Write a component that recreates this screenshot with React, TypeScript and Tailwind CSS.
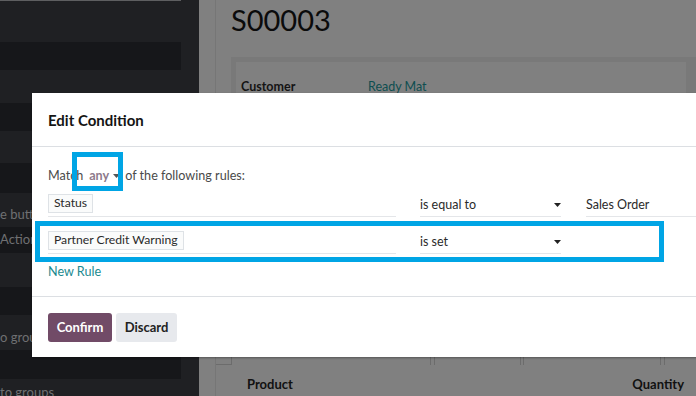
import React from "react";

const font = { fontFamily: 'Lato, "Noto Sans", sans-serif' };

function Caret({ className = "" }: { className?: string }) {
  return (
    <svg width="7" height="4" viewBox="0 0 7 4" className={className}>
      <path d="M0 0 L7 0 L3.5 4 Z" fill="currentColor" />
    </svg>
  );
}

function Band({ h, children }: { h: string; children?: React.ReactNode }) {
  return (
    <div className={`${h} w-[181px] bg-[#16171a] flex items-center overflow-hidden`}>{children}</div>
  );
}

export default function App() {
  return (
    <div
      className="relative w-[696px] h-[396px] overflow-hidden flex bg-[#808080] text-[13px]"
      style={font}
    >
      {/* Sidebar */}
      <div className="w-[199px] shrink-0 bg-[#1f2023] flex flex-col text-[#6f7072] text-[13px]">
        <div className="h-px w-[181px] bg-[#5e5f61]" />
        <div className="h-[41px]" />
        <Band h="h-[28px]" />
        <div className="h-[33px]" />
        <Band h="h-[28px]" />
        <div className="h-[32px]" />
        <Band h="h-[30px]" />
        <div className="h-[34px] flex items-end pb-[3px]">
          <span className="whitespace-nowrap">e butto</span>
        </div>
        <Band h="h-[26px]">
          <span className="whitespace-nowrap">Action</span>
        </Band>
        <div className="h-[34px]" />
        <Band h="h-[28px]" />
        <div className="h-[35px] flex items-end pb-[3px]">
          <span className="whitespace-nowrap">o grou</span>
        </div>
        <Band h="h-[29px]" />
        <div className="h-[17px] flex items-end">
          <span className="whitespace-nowrap leading-[14px] translate-y-[3px]">to groups</span>
        </div>
      </div>

      {/* Main (dimmed) */}
      <div className="flex-1 flex min-w-0">
        <div className="w-[17px] shrink-0 border-r border-[#767676]" />
        <div className="flex-1 flex flex-col pl-[15px] min-w-0">
          <div className="h-[57px] flex items-start pt-[2px]">
            <span className="text-[29px] leading-[36px] text-[#0b0b0b]">S00003</span>
          </div>
          <div className="h-[300px] bg-[#797979] pl-[5px] pt-[5px] pr-[10px]">
            <div className="h-full bg-[#808080] pl-[5px] pt-[16px] flex text-[12.5px]">
              <span className="w-[127px] font-bold text-[#141414]">Customer</span>
              <span className="text-[#0e4e50]">Ready Mat</span>
            </div>
          </div>
          <div className="flex-1 flex items-center justify-between pt-[16px] pl-[16px] pr-[12px] text-[13px] font-bold text-[#111]">
            <span>Product</span>
            <span>Quantity</span>
          </div>
        </div>
      </div>

      {/* Table stub lines under modal */}
      <div className="absolute left-[216px] top-[357px] w-[480px] h-[8px] flex">
        <div className="w-[16px] border-r border-b border-[#6c6c6c]" />
        <div className="w-[199px] border-r border-[#6c6c6c]" />
        <div className="w-[4px] border-r border-[#6c6c6c]" />
        <div className="w-[86px] border-r border-[#6c6c6c]" />
        <div className="w-[3px] border-r border-[#6c6c6c]" />
        <div className="w-[137px] border-r border-[#6c6c6c]" />
        <div className="w-[4px] border-r border-[#6c6c6c]" />
      </div>

      {/* Modal */}
      <div className="absolute left-[32px] top-[93px] w-[700px] h-[264px] bg-white flex flex-col shadow-[0_1px_2px_rgba(0,0,0,0.35)]">
        <div className="h-[54px] shrink-0 flex items-center px-[16px] border-b border-[#dcdfe3]">
          <span className="text-[15px] font-bold text-[#141414] pt-[1px]">Edit Condition</span>
        </div>
        <div className="flex-1 flex flex-col pl-[16px] pt-[19px] text-[#4a4a4a]">
          <div className="h-[20px] flex items-center text-[12.6px]">
            <span>Match</span>
            <span className="ml-[6px] font-bold text-[#8e7a8b]">any</span>
            <Caret className="ml-[4px] text-[#555]" />
            <span className="ml-[5px]">of the following rules:</span>
          </div>
          {/* Rule 1 */}
          <div className="mt-[8px] h-[23px] flex text-[#2a2a2a] text-[12.5px]">
            <div className="w-[348px] border-b border-[#e4e6e9] flex items-start">
              <span className="h-[19px] px-[5px] flex items-center border border-[#dee2e6] bg-[#fafbfb] leading-none text-[12.2px]">Status</span>
            </div>
            <div className="ml-[24px] w-[141px] border-b border-[#e4e6e9] flex items-start justify-between pt-[2px]">
              <span>is equal to</span>
              <Caret className="mt-[7px] text-[#222]" />
            </div>
            <div className="ml-[25px] flex-1 border-b border-[#e4e6e9] pt-[2px]">
              <span>Sales Order</span>
            </div>
          </div>
          {/* Rule 2 */}
          <div className="mt-[14px] h-[23px] flex text-[#2a2a2a] text-[12.5px]">
            <div className="w-[348px] border-b border-[#e4e6e9] flex items-start">
              <span className="h-[19px] px-[5px] flex items-center border border-[#dee2e6] bg-[#fafbfb] leading-none text-[12.2px]">Partner Credit Warning</span>
            </div>
            <div className="ml-[24px] w-[141px] border-b border-[#e4e6e9] flex items-start justify-between pt-[2px]">
              <span>is set</span>
              <Caret className="mt-[7px] text-[#222]" />
            </div>
            <div className="ml-[25px] flex-1" />
          </div>
          <div className="mt-[8px] h-[20px] flex items-center text-[12.6px] text-[#1b8a8f]">New Rule</div>
        </div>
        <div className="h-[61px] shrink-0 border-t border-[#dcdfe3] flex items-start gap-[4px] pl-[16px] pt-[16px]">
          <button className="h-[29px] w-[64px] rounded-[3px] bg-[#714b67] text-white text-[13px] font-bold">Confirm</button>
          <button className="h-[29px] w-[61px] rounded-[3px] bg-[#e7e9ed] text-[#222] text-[13px] font-bold">Discard</button>
        </div>
      </div>

      {/* Highlight annotations */}
      <div className="absolute left-[72px] top-[152px] w-[51px] h-[39px] border-[5px] border-[#00a5e5]" />
      <div className="absolute left-[35px] top-[221px] w-[629px] h-[41px] border-[5px] border-[#00a5e5]" />
    </div>
  );
}
